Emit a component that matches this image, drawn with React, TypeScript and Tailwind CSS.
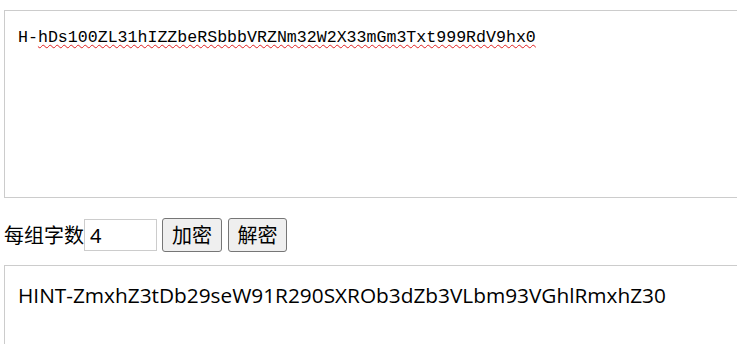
import { useState } from 'react';

const cipher = 'hDs100ZL31hIZZbeRSbbbVRZNm32W2X33mGm3Txt999RdV9hx0';
const plain = 'HINT-ZmxhZ3tDb29seW91R290SXROb3dZb3VLbm93VGhlRmxhZ30';

export default function App() {
	const [size, setSize] = useState('4');

	return (
		<div className="h-[344px] w-full overflow-hidden bg-white pl-1 pt-[10px] text-black">
			{/* source text */}
			<div className="h-[188px] w-[800px] border border-[#cccccc] px-[13px] pt-[17px] font-['Liberation_Mono',monospace] text-[16.6px] leading-5">
				H-
				<span className="underline decoration-[#e02020] decoration-wavy decoration-1 underline-offset-2">
					{cipher}
				</span>
			</div>

			{/* controls */}
			<div className="mt-5 flex items-center font-['Noto_Sans_CJK_SC',sans-serif] text-[20px] leading-none">
				<span>每组字数</span>
				<input
					className="h-8 w-[73px] border border-[#cccccc] px-[5px] font-['Noto_Sans',sans-serif] text-[20px] outline-none"
					value={size}
					onChange={(e) => setSize(e.target.value)}
				/>
				<button className="ml-[5px] h-[34px] w-[60px] rounded-[3px] border border-[#767676] bg-[#efefef] text-[20px]">
					加密
				</button>
				<button className="ml-[6px] h-[34px] w-[59px] rounded-[3px] border border-[#767676] bg-[#efefef] text-[20px]">
					解密
				</button>
			</div>

			{/* result */}
			<div className="mt-[13px] h-[120px] w-[800px] border border-[#cccccc] px-[13px] pt-[17px] font-['Open_Sans',sans-serif] text-[20.8px] leading-6">
				{plain}
			</div>
		</div>
	);
}
